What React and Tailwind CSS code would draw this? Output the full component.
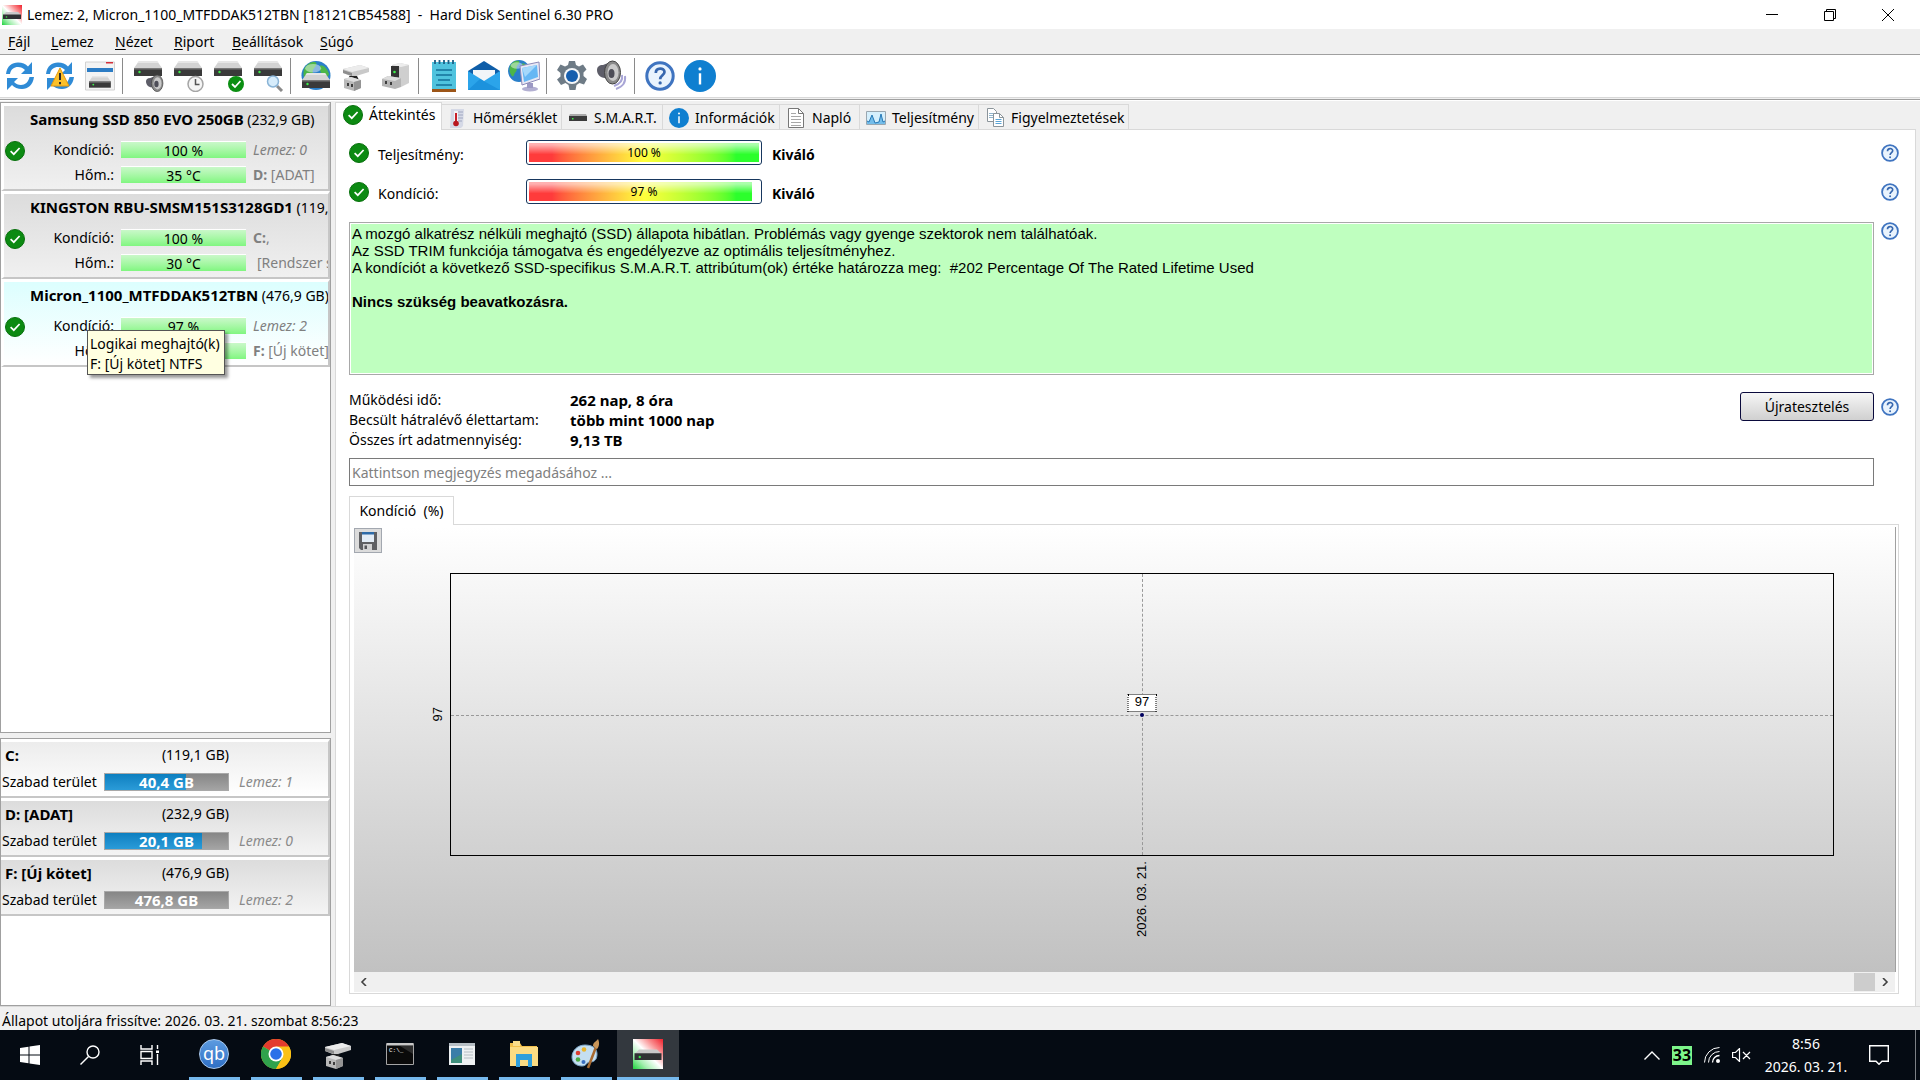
import React from "react";

/* ---------- shared glyphs ---------- */

function Svg({ size = "size-8", box = 32, children }) {
  return (
    <svg viewBox={`0 0 ${box} ${box}`} className={`${size} shrink-0`} aria-hidden="true">
      {children}
    </svg>
  );
}

function CheckIcon({ size = "size-5" }) {
  return (
    <Svg size={size} box={20}>
      <circle cx="10" cy="10" r="9.5" fill="#0c8a12" stroke="#08700d" />
      <path d="M5.6 10.2 8.8 13.2 14.6 7" fill="none" stroke="#fff" strokeWidth="1.7" />
    </Svg>
  );
}

function InfoIcon({ size = "size-5" }) {
  return (
    <Svg size={size} box={20}>
      <circle cx="10" cy="10" r="10" fill="#0f7fd0" />
      <circle cx="10" cy="5.6" r="1" fill="#fff" />
      <path d="M10 8.3v7" stroke="#fff" strokeWidth="1.5" />
    </Svg>
  );
}

function HelpIcon({ size = "size-[18px]" }) {
  return (
    <Svg size={size} box={20}>
      <circle cx="10" cy="10" r="8.8" fill="#e9f3fd" stroke="#3f74c0" strokeWidth="2" />
      <path d="M7.2 8c0-3.8 5.8-3.8 5.8-.6 0 2-2.9 2.3-2.9 4.7" fill="none" stroke="#3767ae" strokeWidth="1.8" />
      <circle cx="10.1" cy="14.6" r="1.1" fill="#3767ae" />
    </Svg>
  );
}

function Drive({ x = 0, y = 0, s = 1 }) {
  return (
    <g transform={`translate(${x} ${y}) scale(${s})`}>
      <path d="M5 0h18l5 7H0z" fill="#d3d3d3" />
      <path d="M5 0h18l1.5 2H3.5z" fill="#e6e6e6" />
      <path d="M0 7h28v8H0z" fill="#3a3a3a" />
      <path d="M0 7h28v1.5H0z" fill="#777" />
      <circle cx="5.5" cy="11" r="1.2" fill="#3cf04a" />
    </g>
  );
}

function RefreshPaths() {
  return (
    <g fill="#2f8bd6">
      <path d="M2 14C3 6 8 2.5 14 2.5c4.500 0 7.500 1.500 10 4L28 2v12H17l4-4c-2-2-4-3-7-3-4 0-7 2-8 7z" />
      <path d="M30 17c-1 8-6 12-12 12-4.500 0-7.500-1.500-10-4l-5 5V18h11l-4 4c2 2 4 3 7 3 4 0 7.500-3 8.500-8z" />
    </g>
  );
}

function Globe({ cx, cy, r }) {
  return (
    <g>
      <circle cx={cx} cy={cy} r={r} fill="#2a7fc9" />
      <path
        transform={`translate(${cx} ${cy}) scale(${r / 10})`}
        d="M-8-5c2-3 5-5 8-4 1 2-1 3-2 5s1 3-1 5-1 4-3 4C-9 2-9-2-8-5zM3-7c3 0 5 3 6 6-1 3-3 4-4 2s-3-4-2-8z"
        fill="#4cb648"
      />
      <ellipse cx={cx - r * 0.2} cy={cy - r * 0.5} rx={r * 0.55} ry={r * 0.3} fill="#fff" opacity="0.45" />
    </g>
  );
}

function Speaker({ x = 0, y = 0, s = 1, waves = false }) {
  return (
    <g transform={`translate(${x} ${y}) scale(${s})`}>
      {waves && (
        <g fill="none" stroke="#a9a6d6" strokeWidth="2">
          <path d="M25 14c1 5-2 9-8 11" />
          <path d="M28 15c1 7-3 11-9 13" />
        </g>
      )}
      <path d="M0 9c0-3 2-5 6-5l10-4v22L8 17c-5 0-8-4-8-8z" fill="#5d5d68" />
      <ellipse cx="15.5" cy="11.5" rx="8" ry="11.500" fill="#8a8a8a" stroke="#444" />
      <ellipse cx="16" cy="11.500" rx="5.500" ry="8.500" fill="#cacaca" />
      <ellipse cx="14.500" cy="12.500" rx="3" ry="4.500" fill="#4e4e58" />
    </g>
  );
}

function DockDrive() {
  return (
    <Svg>
      <path d="M3 9 20 5l9 3v4L13 17l-10-4z" fill="#c9c9c9" />
      <path d="m3 9 17-4 9 3-17 4z" fill="#ececec" />
      <path d="M3 10l9 3v3l-9-3z" fill="#8d8d8d" />
      <path d="M9 16h8l2 4h-8z" fill="#222" />
      <path d="m4 19 7-2 10 3v8l-7 3-10-3z" fill="#b9b9b9" />
      <path d="m4 19 7-2 10 3-7 2z" fill="#dedede" />
      <path d="M14 22v9l7-3v-8z" fill="#949494" />
      <path d="M7 23h2v3H7zM11 24h2v3h-2z" fill="#3d3d3d" />
    </Svg>
  );
}

function AppIcon({ size }) {
  return (
    <svg viewBox="0 0 20 20" className={`${size} shrink-0`} aria-hidden="true">
      <defs>
        <linearGradient id="app" x1="1" y1="0" x2="0" y2="1">
          <stop offset="0" stopColor="#f0202c" />
          <stop offset=".25" stopColor="#f98a8c" />
          <stop offset=".5" stopColor="#fff" />
          <stop offset=".75" stopColor="#a5efb0" />
          <stop offset="1" stopColor="#1fd23e" />
        </linearGradient>
      </defs>
      <path d="M0 0h20v20H0z" fill="url(#app)" />
      <path d="M4 7h12l3 3H1z" fill="#c9c9c9" />
      <path d="M1 9.5h18V14H1z" fill="#303234" />
      <circle cx="4.5" cy="12" r=".8" fill="#35e548" />
    </svg>
  );
}

/* ---------- toolbar ---------- */

const toolbar = [
  [
    ["Frissítés", <Svg><RefreshPaths /></Svg>],
    [
      "Figyelmeztetés",
      <Svg>
        <RefreshPaths />
        <path d="M16 8 25 26H7z" fill="#fbc02a" stroke="#e39a10" strokeLinejoin="round" />
        <path d="M16 13v7M16 22v2.2" stroke="#2b2b2b" strokeWidth="2" />
      </Svg>,
    ],
    [
      "Lemez adatai",
      <Svg>
        <path d="M1.5 2h29v28h-29z" fill="#f3f3f3" stroke="#d2d2d2" />
        <path d="M22 2h7v1.5h-7z" fill="#d3303a" />
        <path d="M3 8h26v4H3z" fill="#2c7cc4" />
        <Drive x={5} y={16} s={0.78} />
      </Svg>,
    ],
  ],
  [
    ["Hangos figyelmeztetés", <Svg><Drive x={2} y={1} /><Speaker x={14} y={15} s={0.72} /></Svg>],
    [
      "Ütemezés",
      <Svg>
        <Drive x={2} y={1} />
        <circle cx="23.5" cy="24" r="7.5" fill="#f5f5f5" stroke="#a5a5a5" strokeWidth="1.5" />
        <path d="M23.5 19v5.5h4" fill="none" stroke="#555" strokeWidth="1.5" />
      </Svg>,
    ],
    [
      "Teszt",
      <Svg>
        <Drive x={2} y={1} />
        <circle cx="24" cy="24" r="8" fill="#0b8f12" />
        <path d="m20 24 3 3 5.5-6" fill="none" stroke="#fff" strokeWidth="1.8" />
      </Svg>,
    ],
    [
      "Felület teszt",
      <Svg>
        <Drive x={2} y={1} />
        <path d="m25 26 5 5" stroke="#8a8a8a" strokeWidth="3" />
        <circle cx="21" cy="21.500" r="5.500" fill="#d6ecfb" stroke="#8ab4d6" strokeWidth="1.5" />
      </Svg>,
    ],
  ],
  [
    ["Hálózat", <Svg><Globe cx={16} cy={15.5} r={14.5} /><Drive x={2} y={13} /></Svg>],
    ["Csatlakoztatás", <DockDrive />],
    [
      "Dokkoló",
      <Svg>
        <path d="m12 5 8-2 9 2v18l-8 4-9-4z" fill="#cfcfcf" />
        <path d="m12 5 8-2 9 2-8 2z" fill="#ededed" />
        <path d="M11 6h8v13h-8z" fill="#333" />
        <circle cx="14.5" cy="12" r="1.3" fill="#3cf04a" />
        <path d="m2 19 6-3 13 2v9l-6 2-13-3z" fill="#b4b4b4" />
        <path d="m2 19 6-3 13 2-6 3z" fill="#dcdcdc" />
        <path d="M5 21h2v3H5zM10 22h2v3h-2z" fill="#3d3d3d" />
      </Svg>,
    ],
  ],
  [
    [
      "Jegyzet",
      <Svg>
        <path d="M4 2h24v27H4z" fill="#4fc3de" />
        <path d="M4 29h24v3H4z" fill="#9c5518" />
        <path d="M7 0v4M11.5 0v4M16 0v4M20.5 0v4M25 0v4" stroke="#1b5f86" strokeWidth="1.8" />
        <path d="M8 10h16M8 15h16M10 20h12M8 25h16" stroke="#14719a" strokeWidth="1.6" />
      </Svg>,
    ],
    [
      "E-mail",
      <Svg>
        <path d="M0 11 16 1l16 10v19H0z" fill="#0f5ea8" />
        <path d="M5 10h22v12H5z" fill="#f2f5f8" />
        <path d="m0 11 16 10 16-10v19H0z" fill="#2ba4ea" />
        <path d="m0 30 12-11 20 11z" fill="#1c92dd" />
      </Svg>,
    ],
    [
      "Távoli gép",
      <Svg>
        <Globe cx={11} cy={11} r={11} />
        <ellipse cx="22" cy="29" rx="8" ry="2.5" fill="#b3b0d2" />
        <path d="M19 23h6v5h-6z" fill="#9c99c4" />
        <path d="m12 6 19-4 1 17-18 6z" fill="#e8e8f4" stroke="#8d8ab8" />
        <path d="m14 8 15-3 1 12-14 5z" fill="#66b7f4" />
        <path d="m14 8 15-3-12 12z" fill="#a5d8fb" />
      </Svg>,
    ],
  ],
  [
    [
      "Beállítások",
      <Svg>
        <path
          d="m13 1h6l1 4 3 1.5 4-2 3.5 5-3 3v3.5l3.5 3-3 5.5-4.500-1.500-3 2-1 5h-6l-1-5-3-2L5 25l-4-5.500 3.500-3V13L1 10l3.500-5.500 4.500 2L12 5z"
          fill="#6e7b86"
        />
        <circle cx="16" cy="16" r="8" fill="#f5f7f9" />
        <circle cx="16" cy="16" r="6" fill="#175fae" />
      </Svg>,
    ],
    ["Hang", <Svg><Speaker x={1} y={1} waves /></Svg>],
  ],
  [
    ["Súgó", <HelpIcon size="size-[30px]" />],
    ["Névjegy", <InfoIcon size="size-8" />],
  ],
];

function Toolbar() {
  return (
    <div role="toolbar" className="flex h-[42px] shrink-0 items-center bg-white">
      {toolbar.map((group, g) => (
        <React.Fragment key={g}>
          {g > 0 && <span className="mr-[5px] ml-0.5 h-9 w-px bg-[#8a8a8a]" />}
          {group.map(([label, icon]) => (
            <button key={label} type="button" aria-label={label} className="flex h-10 w-10 items-center justify-center">
              {icon}
            </button>
          ))}
        </React.Fragment>
      ))}
    </div>
  );
}

/* ---------- sidebar ---------- */

const disks = [
  { name: "Samsung SSD 850 EVO 250GB", size: "(232,9 GB)", health: "100 %", temp: "35 °C", a: <i>Lemez: 0</i>, b: <><b>D:</b> [ADAT]</> },
  { name: "KINGSTON RBU-SMSM151S3128GD1", size: "(119,2 GB)", health: "100 %", temp: "30 °C", a: <><b>C:</b>,</>, b: <span className="pl-1">[Rendszer számára]</span> },
  { name: "Micron_1100_MTFDDAK512TBN", size: "(476,9 GB)", health: "97 %", temp: "31 °C", a: <i>Lemez: 2</i>, b: <><b>F:</b> [Új kötet]</>, selected: true },
];

const volumes = [
  { name: "C:", size: "(119,1 GB)", free: "40,4 GB", used: 66, disk: "Lemez: 1", light: true },
  { name: "D: [ADAT]", size: "(232,9 GB)", free: "20,1 GB", used: 79, disk: "Lemez: 0" },
  { name: "F: [Új kötet]", size: "(476,9 GB)", free: "476,8 GB", used: 0, disk: "Lemez: 2" },
];

function Meter({ children }) {
  return (
    <span className="flex h-[17px] w-[125px] items-center justify-center border-t border-white bg-linear-to-b from-[#c9f8c9] to-[#80f680]">
      {children}
    </span>
  );
}

function DiskCard({ disk }) {
  return (
    <li className="relative">
      <button
        type="button"
        className={`flex h-[88px] w-full flex-col items-start gap-1 overflow-hidden border-t-[3px] border-r-2 border-b-2 border-l-[3px] border-t-white border-r-[#c6c6c6] border-b-[#c6c6c6] border-l-white bg-linear-to-b text-left whitespace-nowrap ${
          disk.selected ? "from-[#dcfefe] to-white" : "from-[#dcdcdc] to-[#f0f0f0]"
        }`}
      >
        <span className="pl-[26px] leading-[26px]">
          <b className="text-[15px]">{disk.name}</b> {disk.size}
        </span>
        <span className="flex items-start">
          <span className="w-[26px] pt-1 pl-px">
            <CheckIcon />
          </span>
          <span className="grid grid-cols-[84px_125px_auto] items-center gap-x-[7px] leading-[25px]">
            <span className="text-right">Kondíció:</span>
            <Meter>{disk.health}</Meter>
            <span className="text-[#808080]">{disk.a}</span>
            <span className="text-right">Hőm.:</span>
            <Meter>{disk.temp}</Meter>
            <span className="text-[#808080]">{disk.b}</span>
          </span>
        </span>
      </button>
      {disk.selected && (
        <div role="tooltip" className="absolute top-[51px] left-[86px] border border-[#555] bg-[#ffffe1] pt-[3px] pr-1 pl-0.5 leading-5 whitespace-nowrap shadow-[3px_3px_3px_rgba(0,0,0,0.4)]">
          Logikai meghajtó(k)
          <br />
          F: [Új kötet] NTFS
        </div>
      )}
    </li>
  );
}

function VolumeCard({ v }) {
  return (
    <li>
      <button
        type="button"
        className={`block h-[59px] w-full border-t-[3px] border-r-2 border-b-2 border-t-white border-r-[#c6c6c6] border-b-[#c6c6c6] bg-linear-to-b pl-px text-left whitespace-nowrap ${
          v.light ? "from-[#ececec] to-white" : "from-[#dcdcdc] to-[#f4f4f4]"
        }`}
      >
        <span className="flex w-[227px] justify-between pl-[3px] leading-[26px]">
          <b className="text-[15px]">{v.name}</b>
          <span>{v.size}</span>
        </span>
        <span className="grid grid-cols-[102px_125px_1fr] items-center leading-7">
          <span>Szabad terület</span>
          <span className="relative flex h-[18px] items-center justify-center border border-[#a8a8a8] bg-linear-to-b from-[#868686] to-[#a4a4a4]">
            <span className="absolute inset-y-0 left-0 bg-linear-to-b from-[#0b7fc0] to-[#2a9bd8]" style={{ width: `${v.used}%` }} />
            <b className="relative text-[15px] text-white">{v.free}</b>
          </span>
          <i className="pl-2.5 text-[#8a8a8a]">{v.disk}</i>
        </span>
      </button>
    </li>
  );
}

/* ---------- main panel ---------- */

const tabs = [
  ["Áttekintés", "w-[107px] pl-[7px] gap-1.5", <CheckIcon />],
  [
    "Hőmérséklet",
    "w-[120px] pl-[7px] gap-2",
    <svg viewBox="0 0 16 20" className="h-5 w-4" aria-hidden="true">
      <path d="M2 1h13l-1 17-2 2H1z" fill="#d5d9e6" />
      <path d="M9 4h5M9 7h5M9 10h5M9 13h4" stroke="#a0a7c0" />
      <path d="M5 3h4v10H5z" fill="#f2f2f6" />
      <path d="M7 5v11" stroke="#c8202a" strokeWidth="2" />
      <circle cx="7" cy="15.5" r="2.8" fill="#b8161f" />
    </svg>,
  ],
  [
    "S.M.A.R.T.",
    "w-[101px] pl-[7px] gap-[7px]",
    <svg viewBox="0 0 18 8" className="h-2 w-[18px]" aria-hidden="true">
      <path d="M1 0h16l1 2H0z" fill="#aaa" />
      <path d="M0 2h18v5H0z" fill="#3b3b3b" />
      <path d="M3 4h1.5v1.5H3z" fill="#3cf04a" />
    </svg>,
  ],
  ["Információk", "w-[117px] pl-1.5 gap-1.5", <InfoIcon />],
  [
    "Napló",
    "w-20 pl-2 gap-2",
    <svg viewBox="0 0 16 20" className="h-5 w-4" aria-hidden="true">
      <path d="M.5.5h10l5 5v14H.5z" fill="#fff" stroke="#777" />
      <path d="M10.5.5v5h5" fill="none" stroke="#777" />
      <path d="M3 5.5h5M3 8.5h10M3 11.5h10M3 14.5h10M3 17.5h10" stroke="#a8a8a8" />
    </svg>,
  ],
  [
    "Teljesítmény",
    "w-[119px] pl-1.5 gap-1.5",
    <svg viewBox="0 0 20 14" className="h-3.5 w-5" aria-hidden="true">
      <path d="M.5.5h19v13H.5z" fill="#d5effc" stroke="#9aa7b0" />
      <path d="M1 13v-3l2 1 3-7 3 8 4-1 2-8 2 8 2-1v3z" fill="#74bdea" />
      <path d="m1 10 2 1 3-7 3 8 4-1 2-8 2 8 2-1" fill="none" stroke="#2678b5" />
    </svg>,
  ],
  [
    "Figyelmeztetések",
    "w-[150px] pl-2 gap-[7px]",
    <svg viewBox="0 0 17 19" className="h-[19px] w-[17px]" aria-hidden="true">
      <path d="M.5.5h6l3 3v10h-9z" fill="#fff" stroke="#8b949a" />
      <path d="M2 5.5h5M2 7.5h5M2 9.5h5" stroke="#8fb4cc" />
      <path d="M6.5 5.5h6l4 4v9h-10z" fill="#fff" stroke="#8b949a" />
      <path d="M12.5 5.5v4h4" fill="none" stroke="#8b949a" />
      <path d="M8.5 11.5h6M8.5 13.5h6M8.5 15.5h6" stroke="#5aa4d6" />
    </svg>,
  ],
];

function HelpButton() {
  return (
    <button type="button" aria-label="Súgó" className="block size-[18px]">
      <HelpIcon />
    </button>
  );
}

function RatingRow({ label, value }) {
  return (
    <div className="flex h-[39px] shrink-0 items-center">
      <CheckIcon />
      <span className="w-[157px] pt-1 pl-[9px]">{label}:</span>
      <div className="relative h-[25px] w-[236px] rounded-[3px] border border-[#17375e] bg-white p-0.5">
        <div className="relative h-full overflow-hidden" style={{ width: `${value}%` }}>
          <div className="h-full w-[230px] bg-linear-to-r from-[#ff3b3b] via-[#ffff3c] to-[#2cff2c] from-10% to-90%" />
          <div className="absolute inset-0 bg-linear-to-b from-white/60 from-10% to-transparent to-60%" />
        </div>
        <span className="absolute inset-0 flex items-center justify-center pt-px text-xs">{value} %</span>
      </div>
      <b className="pt-1 pl-2.5">Kiváló</b>
      <span className="ml-auto">
        <HelpButton />
      </span>
    </div>
  );
}

const stats = [
  ["Működési idő:", "262 nap, 8 óra"],
  ["Becsült hátralévő élettartam:", "több mint 1000 nap"],
  ["Összes írt adatmennyiség:", "9,13 TB"],
];

function Chart() {
  return (
    <div className="flex min-h-0 flex-1 flex-col border-r border-[#a0a0a0] bg-linear-to-b from-white to-[#c1c1c1] font-['Liberation_Sans',sans-serif] text-[13px]">
      <div className="h-[46px] pt-px">
        <button type="button" aria-label="Mentés" className="flex h-[25px] w-7 items-center justify-center border border-[#a3a8b0] bg-[#dcdcdc]">
          <svg viewBox="0 0 18 18" className="size-[18px]" aria-hidden="true">
            <path d="M0 0h18v18H2l-2-2z" fill="#5f6063" />
            <path d="M3 0h12v10H3z" fill="#e3ecf5" />
            <path d="M3 0h12v2.5H3z" fill="#2d6ba8" />
            <path d="M4 12h9v6H4z" fill="#d2d2d2" />
            <path d="M5.5 13.5h2.5V17H5.5z" fill="#55565a" />
          </svg>
        </button>
      </div>
      <div className="grid min-h-[120px] flex-1 grid-cols-[96px_1fr_61px]">
        <span className="flex items-center justify-end pr-0.5">
          <span className="rotate-180 [writing-mode:vertical-rl]">97</span>
        </span>
        <div className="relative border border-black">
          <span className="absolute inset-x-0 top-1/2 border-t border-dashed border-[#999]" />
          <span className="absolute inset-y-0 left-1/2 border-l border-dashed border-[#999]" />
          <span className="absolute top-1/2 left-1/2 size-1 -translate-x-1/2 -translate-y-1/2 rounded-full bg-[#000060]" />
          <span className="absolute bottom-[calc(50%+3px)] left-1/2 flex h-[18px] w-[29px] -translate-x-1/2 items-center justify-center border border-dotted border-black bg-white">
            97
          </span>
        </div>
      </div>
      <div className="flex h-[116px] justify-center pt-1.5 pr-[61px] pl-24">
        <span className="h-[75px] rotate-180 leading-4 whitespace-nowrap [writing-mode:vertical-rl]">2026. 03. 21.</span>
      </div>
    </div>
  );
}

function Overview() {
  return (
    <section className="flex min-h-0 flex-1 flex-col border-r border-l border-[#d9d9d9] bg-white pt-[3px] pr-4 pb-3 pl-[13px]">
      <RatingRow label="Teljesítmény" value={100} />
      <RatingRow label="Kondíció" value={97} />
      <div className="mt-[11px] flex gap-[7px]">
        <div className="h-[153px] flex-1 border border-[#a8a8a8] bg-[#bfffbf] pt-0.5 pl-0.5 font-['Liberation_Sans',sans-serif] text-[15px] leading-[17px] shadow-[inset_0_0_0_1px_#fff]">
          <p>A mozgó alkatrész nélküli meghajtó (SSD) állapota hibátlan. Problémás vagy gyenge szektorok nem találhatóak.</p>
          <p>Az SSD TRIM funkciója támogatva és engedélyezve az optimális teljesítményhez.</p>
          <p className="whitespace-pre-wrap">{"A kondíciót a következő SSD-specifikus S.M.A.R.T. attribútum(ok) értéke határozza meg:  #202 Percentage Of The Rated Lifetime Used"}</p>
          <p className="mt-[17px] font-bold">Nincs szükség beavatkozásra.</p>
        </div>
        <HelpButton />
      </div>
      <div className="mt-[15px] flex items-start">
        <dl className="grid flex-1 grid-cols-[221px_1fr] leading-5">
          {stats.map(([k, v]) => (
            <React.Fragment key={k}>
              <dt>{k}</dt>
              <dd className="text-[15px] leading-5 font-bold">{v}</dd>
            </React.Fragment>
          ))}
        </dl>
        <div className="flex items-center gap-[7px] pt-0.5">
          <button type="button" className="h-[29px] w-[134px] rounded-[3px] border border-[#0a0a3c] bg-linear-to-b from-[#f6f6f6] to-[#d0d0d0]">
            Újratesztelés
          </button>
          <HelpButton />
        </div>
      </div>
      <input
        type="text"
        aria-label="Megjegyzés"
        placeholder="Kattintson megjegyzés megadásához ..."
        className="mt-2 mr-[25px] h-7 shrink-0 border border-[#7a7a7a] bg-white px-0.5 placeholder:text-[#808080]"
      />
      <div className="relative z-10 mt-2.5 -mb-px flex">
        <button type="button" className="h-[29px] w-[105px] border border-b-0 border-[#d9d9d9] bg-white whitespace-pre">
          {"Kondíció  (%)"}
        </button>
      </div>
      <div className="flex min-h-0 flex-1 flex-col border border-[#d9d9d9] pt-0.5 pr-0.5 pb-px pl-1">
        <Chart />
        <div className="mr-px flex h-5 items-center bg-[#f0f0f0]">
          <button type="button" aria-label="Balra" className="flex w-5 justify-center">
            <svg viewBox="0 0 8 8" className="size-2" aria-hidden="true"><path d="M6 0 2 4l4 4" fill="none" stroke="#404040" strokeWidth="1.6" /></svg>
          </button>
          <span className="ml-auto h-[18px] w-[21px] bg-[#cdcdcd]" />
          <button type="button" aria-label="Jobbra" className="flex w-5 justify-center">
            <svg viewBox="0 0 8 8" className="size-2" aria-hidden="true"><path d="m2 0 4 4-4 4" fill="none" stroke="#404040" strokeWidth="1.6" /></svg>
          </button>
        </div>
      </div>
    </section>
  );
}

/* ---------- taskbar ---------- */

const system = [
  ["Start", <Svg size="size-5" box={20}><path d="M0 3l8.5-1.200v7.700H0zM9.500 1.600 20 0v9.500H9.500zM0 10.500h8.500v7.700L0 17zM9.500 10.500H20V20L9.500 18.400z" fill="#fff" /></Svg>],
  ["Keresés", <Svg size="size-5" box={20}><circle cx="13" cy="7" r="6" fill="none" stroke="#fff" strokeWidth="1.4" /><path d="M8.5 11.5.5 19.5" stroke="#fff" strokeWidth="1.4" /></Svg>],
  ["Feladatnézet", <Svg size="size-5" box={20}><path d="M1 0v4h11V0M1 20v-4h11v4M1 6.500h11v7H1zM17.500 0v4M17.500 9v11" fill="none" stroke="#fff" strokeWidth="1.4" /><path d="M16 5.5h3v2.500h-3z" fill="#fff" /></Svg>],
];

const apps = [
  [
    "qBittorrent",
    <span className="flex size-[30px] items-center justify-center rounded-full border border-[#a9c9ee] bg-linear-to-b from-[#5c9be0] to-[#2f6fc4] pb-0.5 text-lg leading-none text-white">qb</span>,
  ],
  [
    "Chrome",
    <Svg size="size-[30px]">
      <circle cx="16" cy="16" r="16" fill="#fbc116" />
      <path d="M16 16 2.140 8A16 16 0 0 1 29.860 8z" fill="#e33b2e" />
      <path d="M2.140 8A16 16 0 0 0 16 32l7-12-7-4z" fill="#30a24c" />
      <path d="M16 8h13.860A16 16 0 0 1 16 32l7-12z" fill="#fbc116" />
      <circle cx="16" cy="16" r="8" fill="#fff" />
      <circle cx="16" cy="16" r="6.2" fill="#2a71e8" />
    </Svg>,
  ],
  ["Lemezkezelő", <DockDrive />],
  [
    "Parancssor",
    <Svg size="size-7" box={28}>
      <path d="M.5 3.5h27v21H.5z" fill="#0a0a0a" stroke="#a5a5a5" />
      <path d="M1 3h26v2.500H1z" fill="#c8c8c8" />
      <path d="M27 14V6H14z" fill="#2c2c2c" />
      <text x="3" y="12" fontSize="6" fill="#fff" fontFamily="Liberation Mono, monospace">C:\_</text>
    </Svg>,
  ],
  [
    "Jelentés",
    <Svg size="size-7" box={28}>
      <path d="M1 3h26v22H1z" fill="#eef1f2" />
      <path d="M1 3h26v3H1z" fill="#b6bec4" />
      <path d="M3 8h11v15H3z" fill="#3f8f7c" />
      <path d="M3 8h11v6L3 20z" fill="#3b7da8" />
      <path d="M16 9h9M16 12h9M16 15h9M16 18h9" stroke="#b6bec4" />
    </Svg>,
  ],
  [
    "Fájlkezelő",
    <Svg size="size-7" box={28}>
      <path d="M0 3h10l2 3h15v20H0z" fill="#f2c04c" />
      <path d="M3 1h7v5H3z" fill="#f9dd8b" />
      <path d="M0 7h28v19H0z" fill="#fbdc83" />
      <path d="M6 14h16v13h-4v-7h-8v7H6z" fill="#2f9fdc" />
    </Svg>,
  ],
  [
    "Paint",
    <Svg size="size-[30px]" box={30}>
      <path d="M14 6C6 6 1 12 1 18s5 9 10 9 4-4 8-4 7-2 7-8-5-9-12-9z" fill="#c5dff1" stroke="#7ba6c8" />
      <circle cx="7" cy="14" r="2.3" fill="#dd3f32" />
      <circle cx="13" cy="10.5" r="2.3" fill="#e9b52e" />
      <circle cx="7" cy="20.5" r="2.3" fill="#4bab44" />
      <circle cx="12.5" cy="23" r="2" fill="#3a6fc0" />
      <path d="M25 8 17 29" stroke="#a86a30" strokeWidth="2.5" />
      <path d="M22 7c0-4 3-4 5-7 2 4 1 8-1 10z" fill="#c99558" />
    </Svg>,
  ],
  ["Hard Disk Sentinel", <AppIcon size="size-[30px]" />],
];

function Taskbar() {
  return (
    <footer className="flex h-[50px] shrink-0 bg-[#050b13] text-white">
      {system.map(([label, icon]) => (
        <button key={label} type="button" aria-label={label} className="flex w-[60px] items-center justify-center">
          {icon}
        </button>
      ))}
      <div className="ml-[3px] flex">
        {apps.map(([label, icon], i) => {
          const active = i === apps.length - 1;
          return (
            <button key={label} type="button" aria-label={label} className={`flex w-[62px] flex-col items-center ${active ? "bg-[#33383e]" : ""}`}>
              <span className="flex flex-1 items-center">{icon}</span>
              <span className={`h-[3px] bg-[#76b9ed] ${active ? "w-full" : "w-[51px]"}`} />
            </button>
          );
        })}
      </div>
      <div className="ml-auto flex items-center">
        <button type="button" aria-label="Rejtett ikonok" className="mr-3">
          <svg viewBox="0 0 16 9" className="h-[9px] w-4" aria-hidden="true"><path d="m.5 8.5 7.500-7.500 7.500 7.500" fill="none" stroke="#fff" strokeWidth="1.4" /></svg>
        </button>
        <b className="mr-3 flex h-[19px] w-5 items-center justify-center bg-[#7df58a] text-base leading-none text-black">33</b>
        <button type="button" aria-label="Hálózat" className="mr-3">
          <Svg size="size-4" box={16}>
            <g fill="none" stroke="#fff">
              <path d="M.5 15.500a15 15 0 0 1 15-15" />
              <path d="M4.5 15.500a11 11 0 0 1 11-11" />
              <path d="M8.5 15.500a7 7 0 0 1 7-7" strokeWidth="1.3" />
            </g>
            <circle cx="14" cy="14" r="2" fill="#fff" />
          </Svg>
        </button>
        <button type="button" aria-label="Hangerő" className="mr-3">
          <svg viewBox="0 0 19 14" className="h-3.5 w-[19px]" aria-hidden="true">
            <path d="M.6 4.5H3.500l4-4v13l-4-4H.6zM11 4l7 7M18 4l-7 7" fill="none" stroke="#fff" strokeWidth="1.2" />
          </svg>
        </button>
        <div className="w-[86px] text-center leading-[23px] whitespace-nowrap">
          8:56
          <br />
          2026. 03. 21.
        </div>
        <button type="button" aria-label="Értesítések" className="mr-[26px] ml-5">
          <Svg size="size-5" box={20}><path d="M.7.7h18.600v15.600H13l-3 3-3-3H.7z" fill="none" stroke="#fff" strokeWidth="1.4" /></Svg>
        </button>
        <span className="mr-1 h-full w-px bg-[#7d8186]" />
      </div>
    </footer>
  );
}

/* ---------- window ---------- */

const menu = [
  ["F", "ájl", "w-[43px]"],
  ["L", "emez", "w-16"],
  ["N", "ézet", "w-[59px]"],
  ["R", "iport", "w-[58px]"],
  ["B", "eállítások", "w-[88px]"],
  ["S", "úgó", "w-16"],
];

export default function App() {
  return (
    <div className="flex h-screen min-h-[800px] flex-col bg-[#f0f0f0] font-['Noto_Sans','Open_Sans',sans-serif] text-sm text-black">
      <header className="flex h-[29px] shrink-0 items-center bg-white pl-0.5">
        <AppIcon size="size-5" />
        <h1 className="pl-[5px] whitespace-pre">{"Lemez: 2, Micron_1100_MTFDDAK512TBN [18121CB54588]  -  Hard Disk Sentinel 6.30 PRO"}</h1>
        <div className="ml-auto flex">
          <button type="button" aria-label="Kis méret" className="flex w-[58px] justify-center">
            <svg viewBox="0 0 12 12" className="size-3" aria-hidden="true"><path d="M0 5.5h12" stroke="#000" /></svg>
          </button>
          <button type="button" aria-label="Előző méret" className="flex w-[58px] justify-center">
            <svg viewBox="0 0 12 12" className="size-3" aria-hidden="true"><path d="M.5 2.5h9v9h-9zM2.5 2.5v-2h9v9h-2" fill="none" stroke="#000" /></svg>
          </button>
          <button type="button" aria-label="Bezárás" className="mr-[3px] flex w-[58px] justify-center">
            <svg viewBox="0 0 12 12" className="size-3" aria-hidden="true"><path d="m0 0 12 12M12 0 0 12" stroke="#000" /></svg>
          </button>
        </div>
      </header>
      <nav className="flex h-[26px] shrink-0 items-center border-b border-[#a0a0a0] pl-2">
        {menu.map(([key, rest, width]) => (
          <button key={key} type="button" className={`text-left ${width}`}>
            <u className="underline-offset-2">{key}</u>
            {rest}
          </button>
        ))}
      </nav>
      <Toolbar />
      <div className="h-1 shrink-0 border-t border-b border-t-[#d9d9d9] border-b-white bg-[#a0a0a0]">
        <div className="h-px bg-[#f0f0f0]" />
      </div>
      <div className="flex min-h-0 flex-1 gap-1 pt-px pr-1">
        <aside className="flex w-[331px] shrink-0 flex-col gap-[5px]">
          <ul className="min-h-0 flex-1 border border-[#a0a0a0] bg-white">
            {disks.map((d) => (
              <DiskCard key={d.name} disk={d} />
            ))}
          </ul>
          <ul className="h-[268px] shrink-0 border border-[#a0a0a0] bg-white">
            {volumes.map((v) => (
              <VolumeCard key={v.name} v={v} />
            ))}
          </ul>
        </aside>
        <main className="flex min-w-0 flex-1 flex-col">
          <div role="tablist" className="flex h-7 shrink-0 items-end border-b border-[#d9d9d9]">
            {tabs.map(([label, layout, icon], i) => (
              <button
                key={label}
                role="tab"
                aria-selected={i === 0}
                type="button"
                className={`flex shrink-0 items-center border-t border-r border-[#d9d9d9] whitespace-nowrap ${layout} ${
                  i === 0 ? "-mb-px h-7 border-l bg-white pb-1" : "h-[25px] pt-px"
                }`}
              >
                {icon}
                {label}
              </button>
            ))}
          </div>
          <Overview />
        </main>
      </div>
      <div role="status" className="flex h-6 shrink-0 items-center border-t border-[#d9d9d9] pt-1 pl-0.5">
        Állapot utoljára frissítve: 2026. 03. 21. szombat 8:56:23
      </div>
      <Taskbar />
    </div>
  );
}
